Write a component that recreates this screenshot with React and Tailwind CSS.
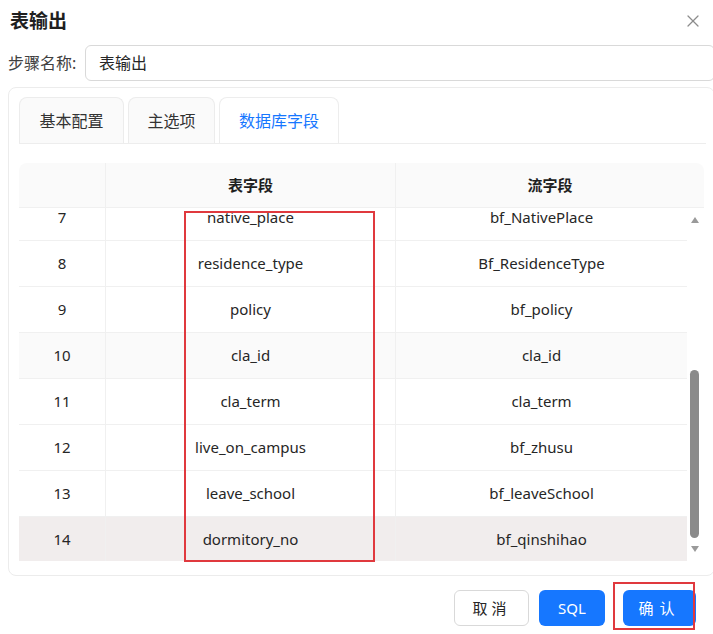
import { X } from 'lucide-react';

const ROWS = [
  { no: 7, table: 'native_place', stream: 'bf_NativePlace' },
  { no: 8, table: 'residence_type', stream: 'Bf_ResidenceType' },
  { no: 9, table: 'policy', stream: 'bf_policy' },
  { no: 10, table: 'cla_id', stream: 'cla_id', hover: true },
  { no: 11, table: 'cla_term', stream: 'cla_term' },
  { no: 12, table: 'live_on_campus', stream: 'bf_zhusu' },
  { no: 13, table: 'leave_school', stream: 'bf_leaveSchool' },
  { no: 14, table: 'dormitory_no', stream: 'bf_qinshihao', selected: true },
];

const TABS = [
  { label: '基本配置', width: 'w-[105px]' },
  { label: '主选项', width: 'w-[87px]' },
  { label: '数据库字段', width: 'w-[120px]', active: true },
];

function rowClass(row) {
  if (row.selected) return 'bg-[#f1eded]';
  if (row.hover) return 'bg-[#fafafa]';
  return 'bg-white';
}

function Scrollbar() {
  return (
    <div className="relative w-[17px] shrink-0 bg-white">
      <span className="absolute left-[4px] top-[9px] h-0 w-0 border-x-[4px] border-b-[6px] border-x-transparent border-b-[#9a9a9a]" />
      <span className="absolute left-[3px] top-[162px] h-[168px] w-[9px] rounded-full bg-[#8a8a8a]" />
      <span className="absolute left-[4px] top-[338px] h-0 w-0 border-x-[4px] border-t-[6px] border-x-transparent border-t-[#9a9a9a]" />
    </div>
  );
}

export default function App() {
  return (
    <div
      className="relative h-[634px] w-[713px] overflow-hidden bg-white text-[#262626]"
      style={{ fontFamily: '"Noto Sans", "Noto Sans CJK SC", sans-serif' }}
    >
      <header className="flex h-[42px] items-center justify-between pl-[10px] pr-[10px]">
        <h1 className="text-[19px] font-bold text-[#1f1f1f]">表输出</h1>
        <X className="h-[20px] w-[20px] text-[#8c8c8c]" strokeWidth={1.5} aria-hidden="true" />
      </header>

      <div className="mt-[3px] flex items-center pl-[8px]">
        <span className="w-[77px] text-[16px] text-[#404040]">步骤名称:</span>
        <div className="flex h-[36px] flex-1 items-center rounded-[6px] border border-[#d9d9d9] pl-[13px] text-[16px] -mr-[2px]">
          表输出
        </div>
      </div>

      <section className="ml-[8px] mt-[6px] h-[489px] rounded-[8px] border border-[#ececec] -mr-[2px] pl-[10px] pr-[8px] pt-[9px]">
        <div className="flex items-end gap-[4px] border-b border-[#ededed]">
          {TABS.map((tab) => (
            <div
              key={tab.label}
              className={[
                'flex h-[46px] items-center justify-center rounded-t-[8px] border border-b-0 text-[16px]',
                tab.width,
                tab.active
                  ? 'border-[#ededed] bg-white text-[#1677ff]'
                  : 'border-[#ececec] bg-[#fafafa] text-[#333]',
              ].join(' ')}
            >
              {tab.label}
            </div>
          ))}
        </div>

        <div className="mt-[19px] w-[685px] overflow-hidden rounded-t-[8px] text-[15px]">
          <div className="flex h-[45px] border-b border-[#f0f0f0] bg-[#fafafa] font-bold text-[#1f1f1f]">
            <div className="w-[87px] shrink-0 border-r border-[#f0f0f0]" />
            <div className="flex w-[290px] shrink-0 items-center justify-center border-r border-[#f0f0f0]">表字段</div>
            <div className="flex flex-1 items-center justify-center">流字段</div>
          </div>

          <div className="flex h-[353px] overflow-hidden">
            <div className="w-[668px] shrink-0">
              <div className="-mt-[13px]">
                {ROWS.map((row) => (
                  <div key={row.no} className={`flex h-[46px] border-b border-[#f0f0f0] ${rowClass(row)}`}>
                    <div className="flex w-[87px] shrink-0 items-center justify-center border-r border-[#f0f0f0]">{row.no}</div>
                    <div className="flex w-[290px] shrink-0 items-center justify-center border-r border-[#f0f0f0]">{row.table}</div>
                    <div className="flex flex-1 items-center justify-center">{row.stream}</div>
                  </div>
                ))}
              </div>
            </div>
            <Scrollbar />
          </div>
        </div>
      </section>

      <footer className="mt-[14px] flex justify-end gap-[10px] pr-[17px]">
        <button className="h-[36px] w-[75px] rounded-[6px] border border-[#d9d9d9] bg-white text-[15px] tracking-[4px] text-[#262626]">
          取消
        </button>
        <button className="h-[36px] w-[66px] rounded-[6px] bg-[#1677ff] text-[15px] text-white">SQL</button>
        <button className="ml-[8px] h-[36px] w-[73px] rounded-[6px] bg-[#1677ff] text-[15px] tracking-[6px] text-white">
          确认
        </button>
      </footer>

      {/* red annotation boxes */}
      <div className="pointer-events-none absolute left-[184px] top-[211px] h-[351px] w-[191px] border-2 border-[#e0393e]" />
      <div className="pointer-events-none absolute left-[613px] top-[582px] h-[48px] w-[82px] border-2 border-[#e0393e]" />
    </div>
  );
}
